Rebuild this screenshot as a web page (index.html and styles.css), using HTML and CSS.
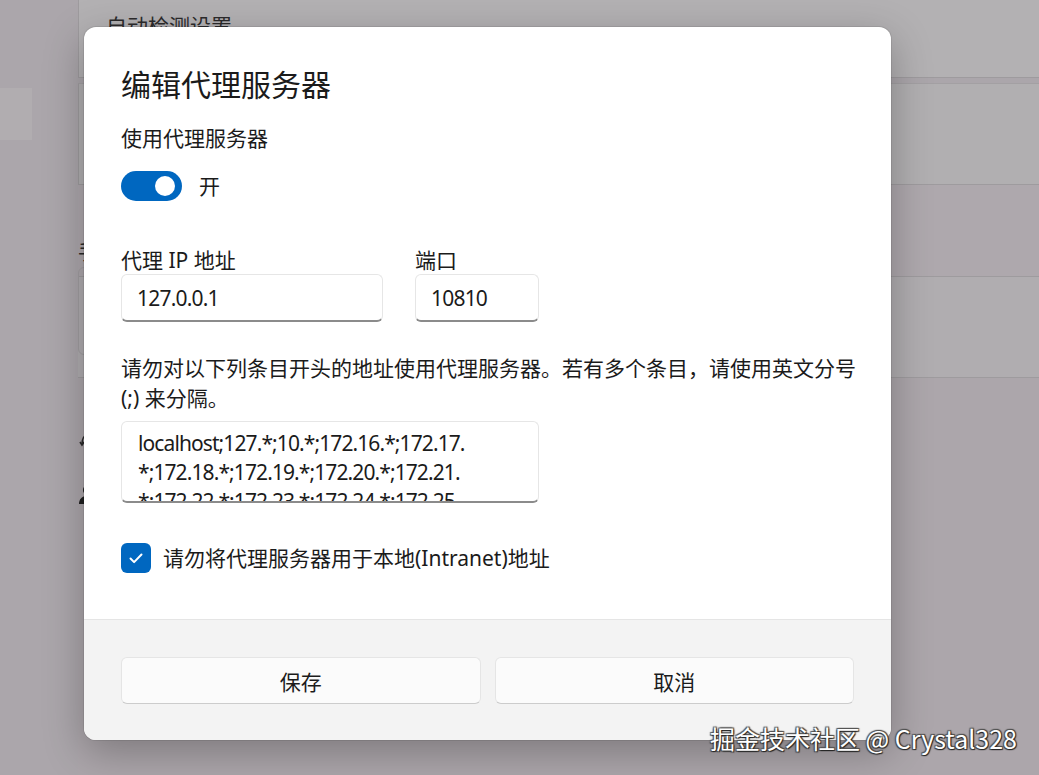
FILE: index.html
```html
<!DOCTYPE html>
<html lang="zh-CN">
<head>
    <meta charset="UTF-8">
    <meta name="viewport" content="width=device-width, initial-scale=1.0">
    <title>编辑代理服务器</title>
    <link rel="stylesheet" href="styles.css">
</head>
<body>
    <div class="settings">
        <aside class="nav">
            <div class="nav-item"></div>
        </aside>
        <main class="content">
            <div class="row row-auto">
                <div class="row-title">自动检测设置</div>
            </div>
            <div class="row row-detect"></div>
            <div class="row row-section">
                <div class="section-title">手动设置代理</div>
            </div>
            <div class="row row-card">
                <div class="inner-card"></div>
            </div>
            <div class="row row-links">
                <div class="link-icon">
                    <svg width="18" height="18" viewBox="0 0 18 18"><path d="M4 14c0-5 2-9 6-9s5 3 4 6" fill="none" stroke="#2a2a2a" stroke-width="1.6"/><path d="M2 12l2 3 2-3" fill="none" stroke="#2a2a2a" stroke-width="1.6"/></svg>
                </div>
                <div class="link-icon">
                    <svg width="18" height="20" viewBox="0 0 18 20"><circle cx="9" cy="5" r="4" fill="#1f1f1f"/><path d="M1 19c0-5 3-8 8-8s8 3 8 8z" fill="#1f1f1f"/></svg>
                </div>
            </div>
        </main>
    </div>

    <div class="dialog">
        <div class="dialog-body">
            <h1 class="dialog-title">编辑代理服务器</h1>
            <div class="field-label">使用代理服务器</div>
            <div class="toggle-row">
                <span class="toggle"><span class="knob"></span></span>
                <span>开</span>
            </div>

            <div class="address-row">
                <div class="field field-ip">
                    <div class="field-label">代理 IP 地址</div>
                    <div class="textbox">127.0.0.1</div>
                </div>
                <div class="field field-port">
                    <div class="field-label">端口</div>
                    <div class="textbox">10810</div>
                </div>
            </div>

            <p class="description">请勿对以下列条目开头的地址使用代理服务器。若有多个条目，请使用英文分号<br>(;) 来分隔。</p>
            <div class="textarea">
                <div>localhost;127.*;10.*;172.16.*;172.17.</div>
                <div>*;172.18.*;172.19.*;172.20.*;172.21.</div>
                <div>*;172.22.*;172.23.*;172.24.*;172.25.</div>
            </div>

            <label class="check-row">
                <span class="checkbox">
                    <svg width="18" height="18" viewBox="0 0 18 18"><path d="M3.5 9.5l3.6 3.6L14.5 5.5" fill="none" stroke="#fff" stroke-width="2" stroke-linecap="round" stroke-linejoin="round"/></svg>
                </span>
                <span>请勿将代理服务器用于本地(Intranet)地址</span>
            </label>
        </div>
        <div class="dialog-footer">
            <button class="btn">保存</button>
            <button class="btn">取消</button>
        </div>
    </div>

    <div class="watermark">掘金技术社区 @ Crystal328</div>
</body>
</html>
```

FILE: styles.css
```css
body {
    margin: 0;
    width: 1039px;
    height: 775px;
    overflow: hidden;
    position: relative;
    font-family: "Noto Sans", "Noto Sans CJK SC", sans-serif;
    color: #1b1b1b;
    background-color: #aba6ab;
}

/* dimmed settings page behind the dialog */
.settings {
    display: grid;
    grid-template-columns: 78px 1fr;
    height: 775px;
}
.nav {
    padding-top: 88px;
}
.nav-item {
    width: 32px;
    height: 52px;
    background: #b1adb0;
}
.content {
    display: flex;
    flex-direction: column;
}
.row {
    border-bottom: 1px solid #9e9b9e;
}
.row-auto {
    height: 77px;
    background: #b3b1b3;
    border-left: 1px solid #9e9b9e;
    margin-bottom: 5px;
}
.row-title {
    padding: 13px 0 0 27px;
    font-size: 21px;
    color: #2c2b2c;
    line-height: 26px;
}
.row-detect {
    height: 100px;
    background: #b1afb1;
    border-top: 1px solid #a3a0a3;
    border-left: 1px solid #9e9b9e;
}
.row-section {
    height: 91px;
    background: #aea8ad;
}
.section-title {
    margin-top: 50px;
    width: 8px;
    overflow: hidden;
    white-space: nowrap;
    font-size: 21px;
    color: #2a2a2a;
}
.row-card {
    height: 100px;
    background: #b0adb0;
}
.inner-card {
    margin-top: -10px;
    width: 12px;
    height: 86px;
    border: 1px solid #a19ea1;
    border-radius: 6px;
}
.row-links {
    flex: 1;
    border-bottom: none;
    background: #aca6ab;
    padding-top: 52px;
}
.link-icon {
    height: 55px;
}

/* dialog */
.dialog {
    position: absolute;
    left: 84px;
    top: 27px;
    width: 807px;
    height: 713px;
    display: flex;
    flex-direction: column;
    background: #fff;
    border-radius: 12px;
    overflow: hidden;
    box-shadow: 0 12px 40px rgba(0, 0, 0, 0.28), 0 0 0 1px rgba(0, 0, 0, 0.08);
}
.dialog-body {
    flex: 1;
    padding: 38px 37px 0 37px;
    font-size: 21px;
}
.dialog-title {
    margin: 0 0 18px 0;
    font-size: 30px;
    font-weight: 400;
    line-height: 40px;
}
.field-label {
    line-height: 30px;
}
.toggle-row {
    display: flex;
    align-items: center;
    gap: 17px;
    margin-top: 18px;
    line-height: 30px;
}
.toggle {
    position: relative;
    width: 61px;
    height: 30px;
    border-radius: 15px;
    background: #0067c0;
}
.knob {
    position: absolute;
    right: 7px;
    top: 5px;
    width: 20px;
    height: 20px;
    border-radius: 50%;
    background: #fff;
}
.address-row {
    display: flex;
    gap: 32px;
    margin-top: 44px;
}
.field-ip {
    width: 262px;
}
.field-port {
    width: 124px;
}
.textbox {
    box-sizing: border-box;
    height: 48px;
    margin-top: -1px;
    padding: 0 15px;
    line-height: 46px;
    letter-spacing: -0.8px;
    border: 1px solid #e6e6e6;
    border-bottom: 2px solid #8b8b8b;
    border-radius: 6px;
    background: #fff;
}
.description {
    margin: 31px 0 8px 0;
    line-height: 30px;
    white-space: nowrap;
}
.textarea {
    box-sizing: border-box;
    width: 418px;
    height: 82px;
    padding: 7px 15px 0 16px;
    line-height: 29px;
    letter-spacing: -0.9px;
    overflow: hidden;
    white-space: nowrap;
    border: 1px solid #e6e6e6;
    border-bottom: 2px solid #8b8b8b;
    border-radius: 6px;
}
.check-row {
    display: flex;
    align-items: center;
    gap: 12px;
    margin-top: 40px;
    line-height: 30px;
}
.checkbox {
    display: flex;
    align-items: center;
    justify-content: center;
    width: 30px;
    height: 30px;
    border-radius: 6px;
    background: #0067c0;
}
.dialog-footer {
    height: 121px;
    box-sizing: border-box;
    padding: 37px 37px 0 37px;
    background: #f3f3f3;
    border-top: 1px solid #e5e5e5;
    display: flex;
    gap: 14px;
}
.btn {
    flex: 1;
    height: 47px;
    font-family: inherit;
    font-size: 21px;
    color: #1b1b1b;
    background: #fbfbfb;
    border: 1px solid #e5e5e5;
    border-bottom-color: #cccccc;
    border-radius: 6px;
}

.watermark {
    position: absolute;
    right: 22px;
    bottom: 21px;
    font-family: "Noto Sans CJK SC", sans-serif;
    font-size: 25px;
    line-height: 32px;
    color: #fff;
    text-shadow: 1px 1px 1px #222, -1px -1px 1px #555, 1px -1px 1px #444, -1px 1px 1px #444;
}
```
